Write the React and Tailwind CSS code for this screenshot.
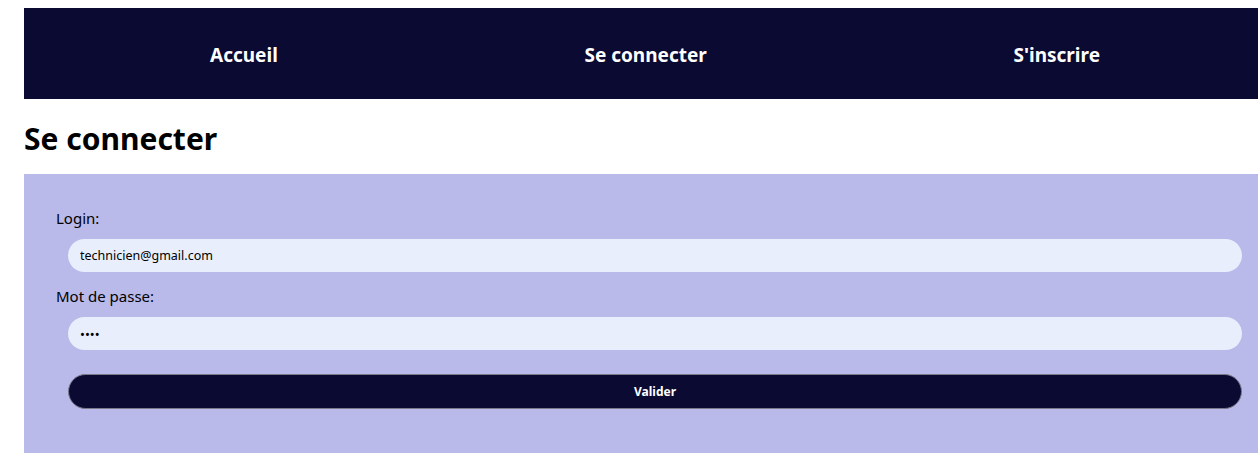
import { useState } from "react";

const links = ["Accueil", "Se connecter", "S'inscrire"];

const App = () => {
  const [login, setLogin] = useState("technicien@gmail.com");
  const [password, setPassword] = useState("1234");

  return (
    <div className="min-h-[456px] bg-white pt-2 pl-6 font-['Noto_Sans',sans-serif] text-black">
      <nav className="flex h-[91px] items-center justify-between bg-[#0b0a33] pt-1 pl-[186px] pr-[158px]">
        {links.map((link) => (
          <a key={link} href="#" className="text-[19px] font-bold text-white">
            {link}
          </a>
        ))}
      </nav>
      <h1 className="pt-5 pb-4 text-[30px] font-bold leading-[39px]">Se connecter</h1>
      <form className="bg-[#b9b9ea] pt-8 pb-11 pl-8 pr-4" onSubmit={(e) => e.preventDefault()}>
        <label className="block text-[15px] leading-6">Login:</label>
        <input
          type="text"
          value={login}
          onChange={(e) => setLogin(e.target.value)}
          className="mt-[9px] ml-3 block h-[33px] w-[calc(100%-12px)] rounded-full bg-[#e8eefc] px-3 text-[12.5px] outline-none"
        />
        <label className="mt-3 block text-[15px] leading-6">Mot de passe:</label>
        <input
          type="password"
          value={password}
          onChange={(e) => setPassword(e.target.value)}
          className="mt-[9px] ml-3 block h-[33px] w-[calc(100%-12px)] rounded-full bg-[#e8eefc] px-3 text-[13px] outline-none"
        />
        <button
          type="submit"
          className="mt-6 ml-3 block h-[35px] w-[calc(100%-12px)] rounded-full border border-[#7a7a8a] bg-[#0b0a33] pt-px text-[12px] font-bold text-white"
        >
          Valider
        </button>
      </form>
    </div>
  );
};

export default App;
